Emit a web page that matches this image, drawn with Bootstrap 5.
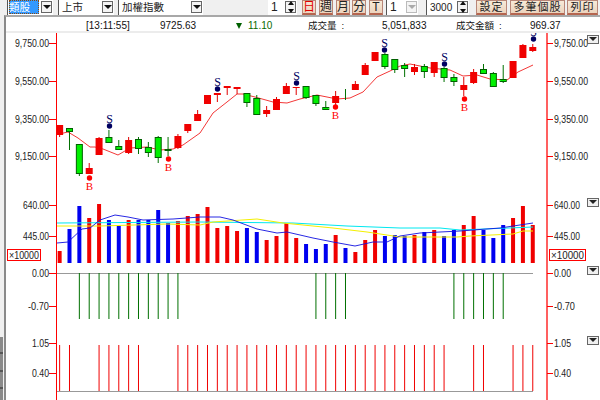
<!DOCTYPE html>
<html lang="zh-Hant">
<head>
    <meta charset="UTF-8">
    <meta name="viewport" content="width=device-width, initial-scale=1.0">
    <title>加權指數</title>
    <link href="https://cdn.jsdelivr.net/npm/bootstrap@5.3.0/dist/css/bootstrap.min.css" rel="stylesheet">
    <style>
        body {
            width: 600px;
            height: 400px;
            overflow: hidden;
            background: #f0f0f0;
            font-family: "Liberation Sans", "Noto Sans CJK TC", sans-serif;
        }
        .tool-row {
            height: 15px;
            padding-left: 7px;
            overflow: hidden;
        }
        .tool-row > * { flex-shrink: 0; }
        .cmb {
            height: 15px;
            background: #fff;
            border-left: 1px solid #555;
            font-size: 10.5px;
            line-height: 15px;
            color: #222;
            padding-left: 3px;
        }
        .cmb-a { width: 46px; margin-right: 5px; padding-left: 1px; }
        .cmb-b { width: 56px; margin-right: 4px; }
        .cmb-c { width: 85px; margin-right: 65px; }
        .cmb-d { width: 29px; margin-right: 4px; border-left: 0; font-size: 12px; }
        .cmb-e { width: 32px; margin-right: 8px; margin-left: 3px; font-size: 12px; }
        .cmb-f { width: 43px; margin-right: 7px; font-size: 10px; }
        .picked { background: #3399ff; color: #fff; width: 30px; height: 14px; line-height: 14px; outline: 1px dotted #8a4a10; outline-offset: -1px; }
        .arrow-btn {
            width: 11px;
            height: 12px;
            margin-top: 1px;
            margin-right: 1px;
            background: #f4f4f4;
            border: 1px solid #666;
        }
        .arrow-btn.off { border-color: #bbb; }
        .tri-down { width: 0; height: 0; border-left: 4px solid transparent; border-right: 4px solid transparent; border-top: 4px solid #111; }
        .tri-up { width: 0; height: 0; border-left: 3px solid transparent; border-right: 3px solid transparent; border-bottom: 4px solid #111; }
        .off .tri-down { border-top-color: #aaa; }
        .tri-small { border-left-width: 3px; border-right-width: 3px; }
        .btn.tbtn {
            height: 15px;
            padding: 0;
            font-size: 11px;
            line-height: 13px;
            color: #222;
            background: linear-gradient(#f7ead8, #ecd3bd);
            border: 1px solid #b98778;
            border-bottom: 2px solid #b5654f;
            border-radius: 0;
            letter-spacing: 1px;
            white-space: nowrap;
        }
        .tbtn-day { width: 14px; margin-left: 1px; margin-right: 3px; }
        .btn.tbtn-one { font-size: 12px; letter-spacing: 0; }
        .btn.tbtn-red { color: #e00000; }
        .tbtn-wk { width: 14px; margin-right: 3px; }
        .tbtn-mo { width: 14px; margin-right: 2px; }
        .tbtn-t { width: 14px; }
        .tbtn-set { width: 31px; margin-right: 3px; }
        .tbtn-multi { width: 55px; margin-right: 2px; }
        .tbtn-print { width: 31px; }
        .work-area {
            border-left: 2px solid #8a8a8a;
            margin-left: 4px;
            background: #fff;
            height: 385px;
            border-top: 2px solid #a8a8a8;
        }
        .info-row {
            display: grid;
            grid-template-columns: 74px 76px 72px 74px 74px 74px auto;
            height: 14px;
            padding-left: 80px;
            font-size: 10px;
            line-height: 18px;
            color: #111;
            white-space: nowrap;
        }
        .info-cn { font-size: 9.5px; }
        .info-colon { margin-left: 5px; }
        .info-up { color: #0a6a00; }
        .info-tri { display: inline-block; width: 0; height: 0; margin-right: 6px; border-left: 3px solid transparent; border-right: 3px solid transparent; border-top: 6px solid #006000; }
        .info-line { height: 2px; background: #ececec; }
        #chartBox { position: absolute; left: 0; top: 0; }
        #chartBox text { font-family: "Liberation Sans", sans-serif; font-size: 10.5px; fill: #222; }
        #chartBox text.sig-b { fill: #f00; font-family: "Liberation Serif", serif; font-size: 11px; }
        #chartBox text.sig-s { fill: #000060; font-family: "Liberation Serif", serif; font-size: 12px; }
    </style>
</head>
<body>
    <div class="tool-row d-flex">
        <div class="cmb cmb-a d-flex justify-content-between"><span class="picked">類股</span><span class="arrow-btn d-flex align-items-center justify-content-center"><i class="tri-down"></i></span></div>
        <div class="cmb cmb-b d-flex justify-content-between"><span>上市</span><span class="arrow-btn d-flex align-items-center justify-content-center"><i class="tri-down"></i></span></div>
        <div class="cmb cmb-c d-flex justify-content-between"><span>加權指數</span><span class="arrow-btn d-flex align-items-center justify-content-center"><i class="tri-down"></i></span></div>
        <div class="cmb cmb-d d-flex justify-content-between"><span>1</span><span class="arrow-btn d-flex flex-column align-items-center justify-content-center gap-1"><i class="tri-up"></i><i class="tri-down tri-small"></i></span></div>
        <button class="btn tbtn tbtn-one tbtn-day tbtn-red">日</button>
        <button class="btn tbtn tbtn-one tbtn-wk">週</button>
        <button class="btn tbtn tbtn-one tbtn-mo">月</button>
        <button class="btn tbtn tbtn-one tbtn-wk">分</button>
        <button class="btn tbtn tbtn-one tbtn-t">T</button>
        <div class="cmb cmb-e d-flex justify-content-between"><span>1</span><span class="arrow-btn off d-flex align-items-center justify-content-center"><i class="tri-down"></i></span></div>
        <div class="cmb cmb-f d-flex justify-content-between"><span>3000</span><span class="arrow-btn d-flex flex-column align-items-center justify-content-center gap-1"><i class="tri-up"></i><i class="tri-down tri-small"></i></span></div>
        <button class="btn tbtn tbtn-set">設定</button>
        <button class="btn tbtn tbtn-multi">多筆個股</button>
        <button class="btn tbtn tbtn-print">列印</button>
    </div>
    <div class="work-area">
        <div class="info-row">
            <span>[13:11:55]</span>
            <span>9725.63</span>
            <span class="info-up"><i class="info-tri"></i>11.10</span>
            <span class="info-cn">成交量<span class="info-colon">:</span></span>
            <span>5,051,833</span>
            <span class="info-cn">成交金額<span class="info-colon">:</span></span>
            <span>969.37</span>
        </div>
        <div class="info-line"></div>
    </div>
    <svg id="chartBox" width="600" height="400" viewBox="0 0 600 400" xmlns="http://www.w3.org/2000/svg"></svg>

    <script src="https://cdn.jsdelivr.net/npm/bootstrap@5.3.0/dist/js/bootstrap.bundle.min.js"></script>
    <script>
        // [body top, body bottom, wick top, wick bottom, up?]
        const candles = [
            [125,135,125,137,1],[128,132,128,150,0],[144,174,144,176,0],[168,174,163,174,1],[138,155,137,155,1],
            [137,143,130,143,0],[146,150,140,150,0],[140,153,137,154,1],[139,149,137,154,0],[147,153,142,157,0],
            [137,158,136,163,0],[149,151,137,156,0],[136,148,134,149,1],[124,131,124,133,1],[114,121,110,121,1],
            [95,104,95,104,1],[93,95,93,102,1],[86,88,86,95,1],[87,89,87,94,1],[93,103,93,107,0],
            [98,115,95,115,0],[110,114,106,117,1],[99,110,97,110,1],[86,94,83,94,1],[87,88,87,95,1],
            [86,98,86,99,0],[95,104,95,106,0],[107,110,101,110,0],[96,103,91,105,1],[89,90,89,100,0],
            [84,90,81,90,1],[65,75,63,75,1],[52,61,52,61,1],[54,67,53,69,0],[59,70,59,73,0],
            [65,69,63,77,0],[67,72,64,75,1],[66,72,64,78,0],[62,73,62,77,1],[68,78,67,82,0],
            [77,82,74,86,0],[85,90,77,96,1],[72,83,69,84,1],[69,74,64,74,0],[73,87,72,87,0],
            [79,82,65,83,0],[61,78,61,78,1],[45,58,44,58,1],[47,51,44,52,1]
        ];
        const volTops = [251,229,206,218,204,220,226,220,220,220,210,223,221,216,214,207,228,226,231,228,232,240,236,223,238,244,249,244,235,248,252,240,230,236,235,236,235,232,230,236,230,225,216,230,238,225,218,206,225];
        const volBlue = [1,2,5,6,8,9,10,11,19,20,25,26,27,29,33,34,35,37,39,40,43,44,45];
        const greenAt = [2,3,4,5,6,7,8,9,10,11,12,26,27,28,29,40,41,42,43,44,45];
        const redAt = [0,1,4,5,6,7,8,12,13,14,15,16,17,18,19,20,21,22,23,24,25,26,27,28,29,30,31,32,33,34,35,36,37,38,39,42,43,46,47,48];
        const maLine = "59,134 68,132 78,138 90,147 95,147 103,149 118,155 130,148 147,147 160,150 173,149 183,145 200,133 213,113 227,102 237,94 243,94 255,97 273,102 287,103 300,99 317,95 337,99 350,98 363,92 377,77 390,71 400,66 410,64 430,68 450,70 463,76 477,75 490,79 507,80 518,72 533,65";
        const blueLine = "57,243 68,242 82,229 90,228 100,220 115,215 128,217 143,220 173,219 200,217 220,217 233,220 257,229 277,233 287,232 313,238 333,242 355,246 373,242 387,242 400,236 420,233 460,231 500,228 533,223";
        const cyanLine = "57,223 200,222 293,223 347,226 400,228 440,228 460,230 533,227";
        const yellowLine = "57,226 100,226 167,224 200,225 213,222 257,219 283,223 333,228 367,232 400,237 417,237 457,237 470,236 513,234 523,231 533,231";
        const sellSignals = [[109,126],[217,89],[296,83],[384,50],[444,64],[533,39]];
        const buySignals = [[89,178],[168,159],[335,107],[464,99]];
        const axisLabels = [
            ["9,750.00",43],["9,550.00",81],["9,350.00",119],["9,150.00",156],
            ["640.00",205],["445.00",236],["0.00",273],["-0.70",306],["1.05",343],["0.40",373]
        ];
        const menuTops = [35,198,266,336];

        // not rounded on purpose, the source image is scaled so columns smear over two pixels
        const xAt = i => 59.64 + i * 9.857;
        let svg = '<defs><clipPath id="plotClip"><rect x="0" y="33" width="600" height="367"/></clipPath></defs>';

        // left frame notches
        svg += '<path d="M1.5 337V400" stroke="#8a8a8a" stroke-width="3"/><path d="M0 353H3M0 371H3M0 388H3" stroke="#222"/>';

        // zero line and baseline
        svg += '<path d="M56 273.5H533M56 391.5H533" stroke="#999" fill="none"/>';

        // moving average
        svg += `<polyline points="${maLine}" fill="none" stroke="#f02020" stroke-width="0.9"/>`;

        // candles
        candles.forEach((c, i) => {
            const x = xAt(i);
            const wick = c[4] ? '#e00000' : '#007000';
            svg += `<path d="M${x} ${c[2]}V${c[3]}" stroke="${wick}"/>`;
            if (c[4]) {
                svg += `<rect x="${x - 3.5}" y="${c[0]}" width="7" height="${c[1] - c[0]}" fill="#f00000"/>`;
            } else {
                svg += `<rect x="${x - 3}" y="${c[0] + 0.5}" width="6" height="${c[1] - c[0] - 1}" fill="#00f000" stroke="#006000"/>`;
            }
        });

        // buy and sell marks
        sellSignals.forEach(s => {
            svg += `<circle cx="${s[0] + 0.5}" cy="${s[1]}" r="2.7" fill="#000060"/>`;
            svg += `<text class="sig-s" clip-path="url(#plotClip)" x="${s[0] + 0.5}" y="${s[1] - 3}" text-anchor="middle">S</text>`;
        });
        buySignals.forEach(s => {
            svg += `<circle cx="${s[0] + 0.5}" cy="${s[1]}" r="2.7" fill="#f00"/>`;
            svg += `<text class="sig-b" x="${s[0] + 0.5}" y="${s[1] + 12}" text-anchor="middle">B</text>`;
        });

        // volume bars
        volTops.forEach((t, i) => {
            const col = volBlue.includes(i) ? '#0000f0' : '#f00000';
            svg += `<rect x="${xAt(i) - 2}" y="${t}" width="4" height="${263 - t}" fill="${col}"/>`;
        });
        svg += `<polyline points="${cyanLine}" fill="none" stroke="#00e8f0"/>`;
        svg += `<polyline points="${yellowLine}" fill="none" stroke="#f4f000"/>`;
        svg += `<polyline points="${blueLine}" fill="none" stroke="#1010e0" stroke-width="0.9"/>`;

        // lower indicators
        greenAt.forEach(i => {
            svg += `<path d="M${xAt(i)} 273V319" stroke="#007000"/>`;
        });
        redAt.forEach(i => {
            svg += `<path d="M${xAt(i)} 345V391" stroke="#f00000"/>`;
        });

        // axes
        svg += '<path d="M56.5 33V400" stroke="#f00"/>';
        svg += '<path d="M547 33V400" stroke="#ff6060" stroke-width="2"/>';
        axisLabels.forEach(a => {
            const w = Math.round(a[0].length * 4.25);
            svg += `<path d="M49 ${a[1] + 0.5}H56M547 ${a[1] + 0.5}H553" stroke="#f00"/>`;
            svg += `<text x="49" y="${a[1] + 4}" text-anchor="end" textLength="${w}" lengthAdjust="spacingAndGlyphs">${a[0]}</text>`;
            svg += `<text x="554" y="${a[1] + 4}" textLength="${w}" lengthAdjust="spacingAndGlyphs">${a[0]}</text>`;
        });

        // x10000 boxes
        [[7,33],[549,36]].forEach(b => {
            svg += `<rect x="${b[0] + 0.5}" y="249.5" width="${b[1]}" height="11" fill="#fff" stroke="#f00"/>`;
            svg += `<text x="${b[0] + 2}" y="259" textLength="${b[1] - 3}" lengthAdjust="spacingAndGlyphs">×10000</text>`;
        });

        // panel menu buttons
        menuTops.forEach(t => {
            svg += `<rect x="587.5" y="${t + 0.5}" width="11" height="8" fill="#f0f0f0" stroke="#666"/>`;
            svg += `<polygon points="589,${t + 2} 597,${t + 2} 593,${t + 6}" fill="#222"/>`;
        });

        document.getElementById('chartBox').innerHTML = svg;
    </script>
</body>
</html>
